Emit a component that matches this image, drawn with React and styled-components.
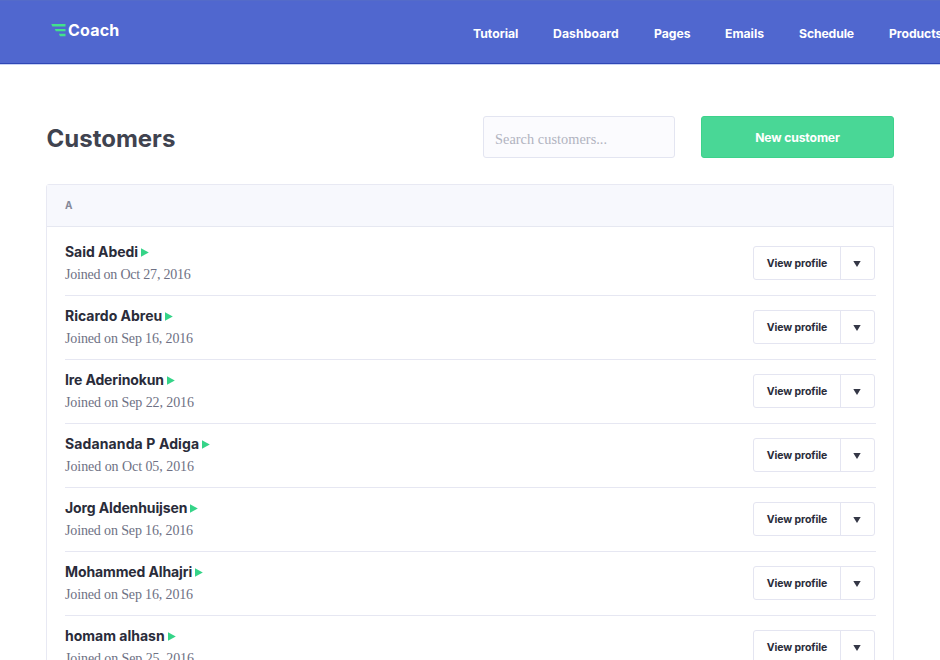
import React from "react";
import styled, { createGlobalStyle } from "styled-components";

const GlobalStyle = createGlobalStyle`
  * { box-sizing: border-box; }
  html, body { margin: 0; height: 660px; overflow: hidden; background: #fff; }
  body { font-family: Inter, "Liberation Sans", sans-serif; color: #2a2c3a; -webkit-font-smoothing: antialiased; }
`;

const Page = styled.div`
  width: 940px;
  height: 660px;
  overflow: hidden;
`;

const Header = styled.header`
  display: flex;
  height: 64px;
  padding-left: 51px;
  background: #5067cf;
  border-top: 1px solid #546bc9;
  border-bottom: 1px solid #2f47b5;
  box-shadow: 0 1px 0 #c9d3f5;
`;

const Brand = styled.div`
  display: flex;
  flex: none;
  align-items: flex-start;
  width: 422px;
  padding-top: 23px;
  gap: 2px;
  svg { display: block; flex: none; }
`;

const BrandName = styled.span`
  font: 700 16px/12px Inter, sans-serif;
  color: #fff;
  letter-spacing: 0.2px;
`;

const Nav = styled.nav`
  display: flex;
  flex: none;
  padding-top: 22px;
`;

const NavLink = styled.a`
  flex: none;
  width: ${(p) => p.$width}px;
  color: #fff;
  font-size: 12.2px;
  font-weight: 700;
  line-height: 21px;
  letter-spacing: ${(p) => p.$tracking}px;
  white-space: nowrap;
`;

const Main = styled.main`
  width: 848px;
  margin: 52px 0 0 46px;
`;

const Toolbar = styled.div`
  display: flex;
  height: 42px;
`;

const Title = styled.h1`
  flex: 1;
  margin: 0;
  padding-left: 0.5px;
  color: #40434f;
  font-size: 24px;
  font-weight: 700;
  line-height: 45px;
`;

const Search = styled.input`
  width: 192px;
  height: 42px;
  margin-right: 26px;
  padding: 4px 11px 0;
  border: 1px solid #e3e5f1;
  border-radius: 3px;
  outline: 0;
  background: #fbfbfe;
  font: 14.3px "Liberation Serif", serif;
  letter-spacing: 0.05px;
  &::placeholder { color: #b1b3c0; opacity: 1; }
`;

const Primary = styled.button`
  width: 193px;
  height: 42px;
  padding: 0;
  border: 1px solid #3dd28b;
  border-radius: 3px;
  background: #49d796;
  color: #fff;
  font: 700 12.2px Inter, sans-serif;
  letter-spacing: -0.15px;
`;

const Card = styled.section`
  height: 520px;
  margin-top: 26px;
  border: 1px solid #e8e9f3;
  border-radius: 3px;
`;

const GroupHead = styled.div`
  height: 42px;
  margin-bottom: 5px;
  padding-left: 18px;
  border-bottom: 1px solid #e6e8f1;
  background: #f7f8fd;
  color: #85889a;
  font-size: 10px;
  font-weight: 700;
  line-height: 41px;
`;

const Row = styled.div`
  display: flex;
  justify-content: space-between;
  height: 64px;
  margin: 0 17px 0 18px;
  border-bottom: 1px solid #e6e7f2;
`;

const Person = styled.div`
  padding-top: 9px;
`;

const Name = styled.div`
  display: flex;
  align-items: center;
  height: 20px;
  font-size: 14px;
  font-weight: 700;
  letter-spacing: ${(p) => p.$tracking}px;
  white-space: nowrap;
  svg { margin: 2px 0 0 3px; }
`;

const Joined = styled.div`
  padding-top: 4px;
  color: #6e7184;
  font: 14px/20px "Liberation Serif", serif;
  letter-spacing: ${(p) => p.$tracking}px;
`;

const SplitButton = styled.div`
  display: flex;
  width: 122px;
  height: 34px;
  margin: 14px 1px 0 0;
  border: 1px solid #e4e5f1;
  border-radius: 3px;
`;

const ViewButton = styled.button`
  width: 87px;
  padding: 1px 0 0;
  border: 0;
  border-right: 1px solid #e4e5f1;
  background: none;
  color: #2a2c3a;
  font: 700 10.5px Inter, sans-serif;
  letter-spacing: -0.08px;
`;

const MenuButton = styled.button`
  display: flex;
  flex: 1;
  align-items: center;
  justify-content: center;
  padding: 1px 1px 0 0;
  border: 0;
  background: none;
`;

const links = [
  ["Tutorial", 80, 0],
  ["Dashboard", 101, 0.1],
  ["Pages", 71, 0],
  ["Emails", 74, 0],
  ["Schedule", 90, -0.1],
  ["Products", 80, -0.05],
];

const customers = [
  ["Said Abedi", "Oct 27, 2016", -0.05, -0.21],
  ["Ricardo Abreu", "Sep 16, 2016", 0, -0.14],
  ["Ire Aderinokun", "Sep 22, 2016", -0.13, -0.1],
  ["Sadananda P Adiga", "Oct 05, 2016", 0.12, -0.06],
  ["Jorg Aldenhuijsen", "Sep 16, 2016", -0.12, -0.14],
  ["Mohammed Alhajri", "Sep 16, 2016", -0.12, -0.14],
  ["homam alhasn", "Sep 25, 2016", 0, -0.1],
];

export default function App() {
  return (
    <Page>
      <GlobalStyle />
      <Header>
        <Brand>
          <svg width="15" height="13" viewBox="0 0 15 13" fill="#42e28c">
            <path d="M.3 0h14.2v2.4H1.3ZM3.8 5h10.7v2.3H4.8ZM7.9 9.8h6.6v2.4H8.9Z" />
          </svg>
          <BrandName>Coach</BrandName>
        </Brand>
        <Nav>
          {links.map(([label, width, tracking]) => (
            <NavLink key={label} $width={width} $tracking={tracking}>{label}</NavLink>
          ))}
        </Nav>
      </Header>
      <Main>
        <Toolbar>
          <Title>Customers</Title>
          <Search placeholder="Search customers..." />
          <Primary>New customer</Primary>
        </Toolbar>
        <Card>
          <GroupHead>A</GroupHead>
          {customers.map(([name, date, tracking, dateTracking]) => (
            <Row key={name}>
              <Person>
                <Name $tracking={tracking}>
                  {name}
                  <svg width="8" height="9" viewBox="0 0 8 9"><path d="M0 .3 7.8 4.5 0 8.7Z" fill="#35d488" /></svg>
                </Name>
                <Joined $tracking={dateTracking}>Joined on {date}</Joined>
              </Person>
              <SplitButton>
                <ViewButton>View profile</ViewButton>
                <MenuButton aria-label="More actions">
                  <svg width="8" height="6" viewBox="0 0 8 6"><path d="M.3 0h7.4L4 6Z" fill="#343746" /></svg>
                </MenuButton>
              </SplitButton>
            </Row>
          ))}
        </Card>
      </Main>
    </Page>
  );
}
